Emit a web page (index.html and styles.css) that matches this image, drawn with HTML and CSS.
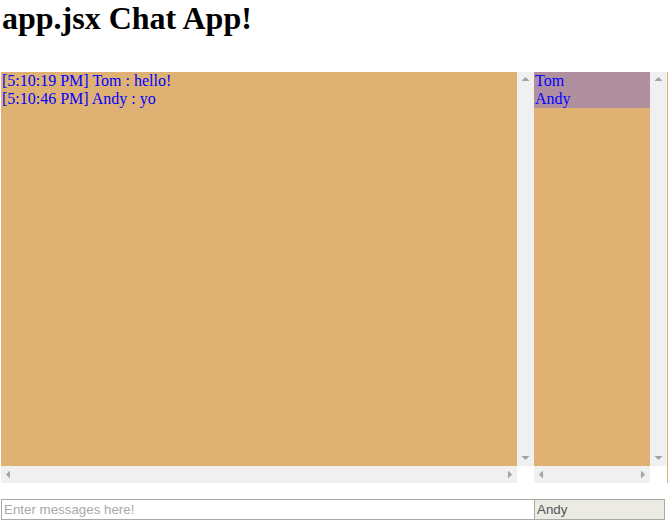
FILE: index.html
```html
<!DOCTYPE html>
<html>
<head>
<meta charset="utf-8">
<title>app.jsx Chat App!</title>
<link rel="stylesheet" href="styles.css">
</head>
<body>
<h1 class="title">app.jsx Chat App!</h1>
<div class="chat">
  <div class="pane messages">
    <div class="pane-body">
      <div class="msg">[5:10:19 PM] Tom : hello!</div>
      <div class="msg">[5:10:46 PM] Andy : yo</div>
    </div>
    <div class="vbar">
      <span class="sbtn"><svg width="17" height="17"><polygon points="4.5,9 12.5,9 8.5,5" fill="#a3a3a3"/></svg></span>
      <span class="track"></span>
      <span class="sbtn"><svg width="17" height="17"><polygon points="4.5,7 12.5,7 8.5,11" fill="#a3a3a3"/></svg></span>
    </div>
    <div class="hbar">
      <span class="sbtn"><svg width="17" height="17"><polygon points="9,4.5 9,12.5 5,8.5" fill="#a3a3a3"/></svg></span>
      <span class="track"></span>
      <span class="sbtn"><svg width="17" height="17"><polygon points="8,4.5 8,12.5 12,8.5" fill="#a3a3a3"/></svg></span>
    </div>
    <div class="corner"></div>
  </div>
  <div class="pane users">
    <div class="pane-body">
      <div class="user-list">
        <div class="user">Tom</div>
        <div class="user">Andy</div>
      </div>
    </div>
    <div class="vbar">
      <span class="sbtn"><svg width="17" height="17"><polygon points="4.5,9 12.5,9 8.5,5" fill="#a3a3a3"/></svg></span>
      <span class="track"></span>
      <span class="sbtn"><svg width="17" height="17"><polygon points="4.5,7 12.5,7 8.5,11" fill="#a3a3a3"/></svg></span>
    </div>
    <div class="hbar">
      <span class="sbtn"><svg width="17" height="17"><polygon points="9,4.5 9,12.5 5,8.5" fill="#a3a3a3"/></svg></span>
      <span class="track"></span>
      <span class="sbtn"><svg width="17" height="17"><polygon points="8,4.5 8,12.5 12,8.5" fill="#a3a3a3"/></svg></span>
    </div>
    <div class="corner"></div>
  </div>
</div>
<form class="composer">
  <input class="entry" type="text" placeholder="Enter messages here!">
  <input class="name" type="text" value="Andy" disabled>
</form>
</body>
</html>
```
FILE: styles.css
```css
html, body {
  margin: 0;
  padding: 0;
  background: #ffffff;
}

body {
  font-family: "Liberation Serif", "Times New Roman", serif;
  font-size: 16px;
}

.title {
  margin: 0 0 35px 0;
  padding-left: 2px;
  font-size: 32px;
  line-height: 37px;
  font-weight: bold;
  color: #000;
}

.chat {
  display: flex;
  margin-left: 1px;
}

.pane {
  display: grid;
  grid-template-columns: 1fr 17px;
  grid-template-rows: 1fr 17px;
  height: 411px;
  box-sizing: border-box;
}

.pane-body {
  overflow: hidden;
  background: #dfb274;
  color: #0000ff;
  line-height: 18px;
}

.messages {
  width: 533px;
}

.messages .pane-body {
  padding-left: 1px;
}

.users {
  width: 134px;
  border-right: 1px solid #dfb274;
}

.user-list {
  background: #b0909f;
  padding-left: 1px;
}

.vbar,
.hbar {
  display: flex;
  background: #f0f0f0;
}

.vbar {
  flex-direction: column;
}

.track {
  flex: 1;
}

.sbtn {
  display: block;
  width: 17px;
  height: 17px;
  flex: none;
}

.sbtn svg {
  display: block;
}

.corner {
  background: #ffffff;
}

.composer {
  display: flex;
  margin: 16px 0 0 1px;
}

.entry,
.name {
  box-sizing: border-box;
  height: 21px;
  margin: 0;
  border: 1px solid #a9a9a9;
  padding: 0 2px;
  font-family: "Liberation Sans", Arial, sans-serif;
  font-size: 13.33px;
  outline: none;
}

.entry {
  width: 534px;
  background: #ffffff;
}

.entry::placeholder {
  color: #a9a9a9;
}

.name {
  width: 131px;
  margin-left: -1px;
  background: #ebebe4;
  color: #545454;
}
```
